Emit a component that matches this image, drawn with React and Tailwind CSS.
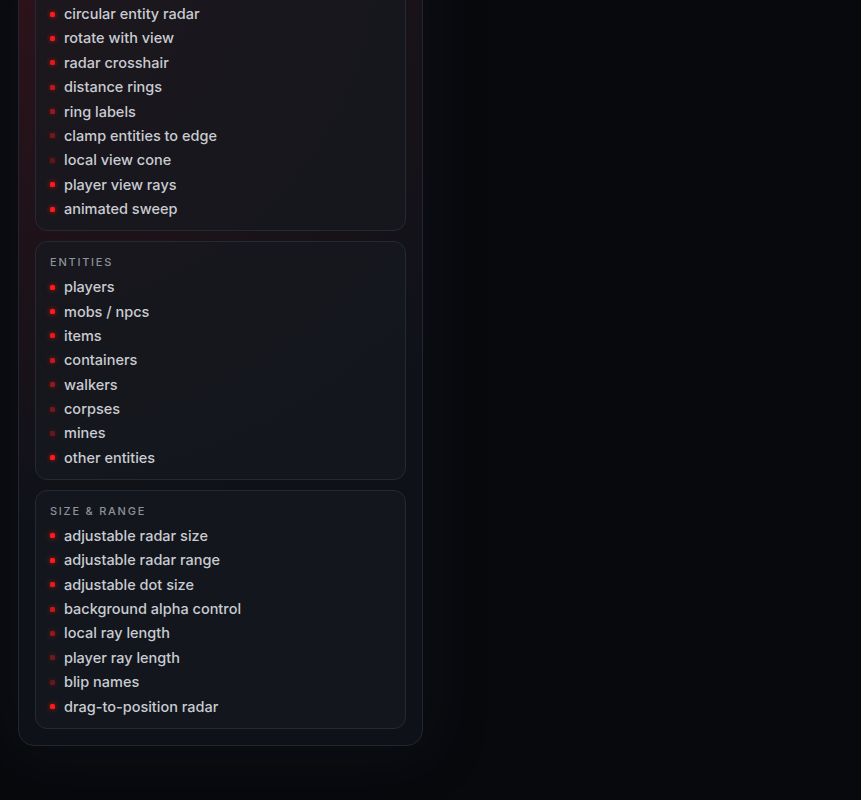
const sections = [
  {
    title: "radar",
    items: [
      ["circular entity radar", 1],
      ["rotate with view", 0.95],
      ["radar crosshair", 0.85],
      ["distance rings", 0.7],
      ["ring labels", 0.55],
      ["clamp entities to edge", 0.4],
      ["local view cone", 0.3],
      ["player view rays", 1],
      ["animated sweep", 1],
    ],
  },
  {
    title: "entities",
    items: [
      ["players", 1],
      ["mobs / npcs", 1],
      ["items", 0.9],
      ["containers", 0.75],
      ["walkers", 0.55],
      ["corpses", 0.4],
      ["mines", 0.35],
      ["other entities", 1],
    ],
  },
  {
    title: "size & range",
    items: [
      ["adjustable radar size", 1],
      ["adjustable radar range", 1],
      ["adjustable dot size", 0.9],
      ["background alpha control", 0.75],
      ["local ray length", 0.55],
      ["player ray length", 0.4],
      ["blip names", 0.35],
      ["drag-to-position radar", 1],
    ],
  },
];

export default function App() {
  return (
    <div
      className="min-h-screen bg-[#08090d] overflow-hidden"
      style={{ fontFamily: "Inter, 'Noto Sans', sans-serif" }}
    >
      <div className="ml-[18px] mt-[-49px] w-[405px] rounded-2xl border border-[#23262e] bg-[#0e1218] bg-[radial-gradient(circle_at_0%_0%,rgba(150,20,30,0.24),transparent_65%)] p-4 shadow-[0_0_60px_rgba(30,34,44,0.35)]">
        <div className="flex flex-col gap-[10px]">
          {sections.map((s) => (
            <Card key={s.title} title={s.title} items={s.items} />
          ))}
        </div>
      </div>
    </div>
  );
}

function Card({ title, items }) {
  return (
    <div className="rounded-xl border border-[#252932] bg-[#151920]/70 px-[14px] pt-[14px] pb-[11px]">
      <h3 className="text-[11px] leading-3 font-medium uppercase tracking-[0.16em] text-[#8d929b]">
        {title}
      </h3>
      <ul className="mt-[9px] flex flex-col gap-[4.4px]">
        {items.map(([label, glow]) => (
          <li key={label} className="flex h-5 items-center gap-[9px]">
            <span
              className="h-[5px] w-[5px] rounded-[1.5px] bg-[#ff1a1a] shadow-[0_0_5px_rgba(235,20,20,0.85)]"
              style={{ opacity: glow }}
            />
            <span className="text-[14.5px] leading-5 font-medium text-[#caccd2]">
              {label}
            </span>
          </li>
        ))}
      </ul>
    </div>
  );
}
